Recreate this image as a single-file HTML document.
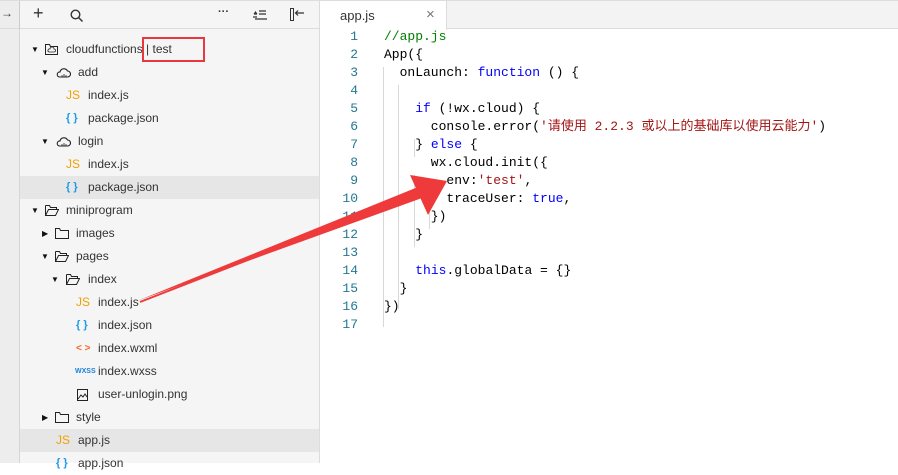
<!DOCTYPE html><html><head><meta charset="utf-8"><style>
*{margin:0;padding:0;box-sizing:border-box}
body{width:898px;height:463px;overflow:hidden;background:#fff;font-family:"Liberation Sans",sans-serif;position:relative}
.strip{position:absolute;left:0;top:0;width:20px;height:463px;background:#ededed;border-right:1px solid #d6d6d6}
.side{position:absolute;left:20px;top:0;width:300px;height:463px;background:#f5f5f5;border-right:1px solid #dcdcdc}
.tb{position:absolute;left:0;top:0;width:320px;height:29px;border-bottom:1px solid #dcdcdc;border-top:1px solid #ddd}
.row{position:absolute;left:20px;width:299px;height:23px;font-size:12px;color:#333;line-height:23px}
.row span{position:absolute;top:0}
.hl{background:#e6e6e6}
.tri{font-size:8px;color:#111}
.js{color:#f0a000;font-size:12px;font-weight:normal}
.br{color:#1a9be8;font-weight:bold;font-size:11px}
.tabbar{position:absolute;left:320px;top:0;width:578px;height:29px;background:#f3f3f3;border-bottom:1px solid #dcdcdc;border-top:1px solid #ddd}
.tab{position:absolute;left:0;top:0;width:127px;height:29px;background:#fff;border-right:1px solid #dcdcdc;font-size:13px;color:#333}
.code{position:absolute;left:320px;top:28px;font-family:"Liberation Mono","Noto Sans CJK SC",monospace;font-size:13px}
.ln{position:absolute;left:0;width:38px;text-align:right;color:#237893;height:18px;line-height:18px}
.cl{position:absolute;left:64px;white-space:pre;height:18px;line-height:18px;color:#000}
.k{color:#0000ff}.s{color:#a31515}.c{color:#008000}
.g{position:absolute;width:1px;background:#d8d8d8}
.cloud{position:absolute;top:7px}
</style></head><body>
<div class="strip"></div><div class="side"></div>
<div class="tb">
<span style="position:absolute;left:1px;top:5px;font-size:12px;color:#333">→</span>
<div style="position:absolute;left:19px;top:0;width:1px;height:28px;background:#ccc"></div>
<span style="position:absolute;left:33px;top:2px;font-size:18px;color:#333">+</span>
<svg style="position:absolute;left:70px;top:8px" width="14" height="14"><circle cx="5.5" cy="5.5" r="4.3" fill="none" stroke="#333" stroke-width="1.4"/><line x1="8.5" y1="8.5" x2="12.5" y2="12.5" stroke="#333" stroke-width="1.5"/></svg>
<span style="position:absolute;left:218px;top:5px;font-size:11px;font-weight:bold;color:#333">···</span>
<svg style="position:absolute;left:253px;top:9px" width="14" height="10"><path d="M1 4h3M0 7h4M6 1h7M6 4h7M2 9h12" stroke="#333" stroke-width="1.2"/><path d="M2.5 1 L0.5 4 L4.5 4Z" fill="#333"/></svg>
<svg style="position:absolute;left:290px;top:7px" width="16" height="14"><rect x="0.5" y="0.5" width="3" height="12" fill="none" stroke="#333"/><path d="M6 5h8M8 2.5 L5.5 5 L8 7.5" fill="none" stroke="#333" stroke-width="1.2"/></svg>
</div>

<div class="row" style="top:38px"><span class="tri" style="left:11px">▼</span>
<svg style="position:absolute;left:25px;top:6px" width="13" height="11"><path d="M0.5 0.5h4l1 2h7v8h-12z" fill="none" stroke="#222"/><path d="M4 8h5a1.5 1.5 0 0 0 0-3a2 2 0 0 0-4 0a1.5 1.5 0 0 0-1 3z" fill="none" stroke="#222" stroke-width=".8"/></svg>
<span style="left:46px">cloudfunctions | test</span></div>
<div style="position:absolute;left:142px;top:37px;width:63px;height:25px;border:2px solid #e8383d"></div>

<div class="row" style="top:61px"><span class="tri" style="left:21px">▼</span><svg class="cloud" style="left:36px" width="15" height="10"><path d="M3.5 9h8a3 3 0 0 0 0-6a4 4 0 0 0-7.5 1a2.5 2.5 0 0 0-0.5 5z" fill="none" stroke="#222" stroke-width="1.1"/><path d="M6 9v-2M8 9v-3M10 9v-2" stroke="#222" stroke-width=".8"/></svg><span style="left:58px">add</span></div>
<div class="row" style="top:84px"><span class="js" style="left:46px">JS</span><span style="left:68px">index.js</span></div>
<div class="row" style="top:107px"><span class="br" style="left:46px">{ }</span><span style="left:68px">package.json</span></div>
<div class="row" style="top:130px"><span class="tri" style="left:21px">▼</span><svg class="cloud" style="left:36px" width="15" height="10"><path d="M3.5 9h8a3 3 0 0 0 0-6a4 4 0 0 0-7.5 1a2.5 2.5 0 0 0-0.5 5z" fill="none" stroke="#222" stroke-width="1.1"/><path d="M6 9v-2M8 9v-3M10 9v-2" stroke="#222" stroke-width=".8"/></svg><span style="left:58px">login</span></div>
<div class="row" style="top:153px"><span class="js" style="left:46px">JS</span><span style="left:68px">index.js</span></div>
<div class="row hl" style="top:176px"><span class="br" style="left:46px">{ }</span><span style="left:68px">package.json</span></div>
<div class="row" style="top:199px"><span class="tri" style="left:11px">▼</span><svg style="position:absolute;left:25px;top:6px" width="14" height="11"><path d="M0.5 0.5h4l1 2h6v2M0.5 0.5v10h10l3-6h-10l-3 6" fill="none" stroke="#222"/></svg><span style="left:46px">miniprogram</span></div>
<div class="row" style="top:222px"><span class="tri" style="left:22px">▶</span><svg style="position:absolute;left:35px;top:6px" width="14" height="11"><path d="M0.5 0.5h4l1 2h8v8h-13z" fill="none" stroke="#222"/></svg><span style="left:56px">images</span></div>
<div class="row" style="top:245px"><span class="tri" style="left:21px">▼</span><svg style="position:absolute;left:35px;top:6px" width="14" height="11"><path d="M0.5 0.5h4l1 2h6v2M0.5 0.5v10h10l3-6h-10l-3 6" fill="none" stroke="#222"/></svg><span style="left:56px">pages</span></div>
<div class="row" style="top:268px"><span class="tri" style="left:31px">▼</span><svg style="position:absolute;left:46px;top:6px" width="14" height="11"><path d="M0.5 0.5h4l1 2h6v2M0.5 0.5v10h10l3-6h-10l-3 6" fill="none" stroke="#222"/></svg><span style="left:68px">index</span></div>
<div class="row" style="top:291px"><span class="js" style="left:56px">JS</span><span style="left:78px">index.js</span></div>
<div class="row" style="top:314px"><span class="br" style="left:56px">{ }</span><span style="left:78px">index.json</span></div>
<div class="row" style="top:337px"><span style="left:56px;color:#f06a28;font-weight:bold;font-size:10px">&lt; &gt;</span><span style="left:78px">index.wxml</span></div>
<div class="row" style="top:360px"><span style="left:55px;color:#1a7fd8;font-weight:bold;font-size:7px">WXSS</span><span style="left:78px">index.wxss</span></div>
<div class="row" style="top:383px"><svg style="position:absolute;left:57px;top:6px" width="11" height="12"><rect x="0.5" y="0.5" width="10" height="11" fill="none" stroke="#222"/><path d="M1 10l3-4 2 2 2-3 2 3" fill="none" stroke="#222"/></svg><span style="left:78px">user-unlogin.png</span></div>
<div class="row" style="top:406px"><span class="tri" style="left:22px">▶</span><svg style="position:absolute;left:35px;top:6px" width="14" height="11"><path d="M0.5 0.5h4l1 2h8v8h-13z" fill="none" stroke="#222"/></svg><span style="left:56px">style</span></div>
<div class="row hl" style="top:429px"><span class="js" style="left:36px">JS</span><span style="left:58px">app.js</span></div>
<div class="row" style="top:452px"><span class="br" style="left:36px">{ }</span><span style="left:58px">app.json</span></div>

<div class="tabbar"><div class="tab"><span style="position:absolute;left:20px;top:7px">app.js</span><span style="position:absolute;left:106px;top:5px;font-size:15px;color:#777">×</span></div></div>

<div class="code">
<div class="g" style="top:39px;height:260px;left:63px"></div>
<div class="g" style="left:78px;top:57px;height:224px"></div>
<div class="g" style="left:94px;top:111px;height:18px"></div>
<div class="g" style="left:94px;top:147px;height:72px"></div>
<div class="g" style="left:109px;top:165px;height:36px"></div>
<div class="ln" style="top:0">1</div><div class="cl c" style="top:0">//app.js</div>
<div class="ln" style="top:18px">2</div><div class="cl" style="top:18px">App({</div>
<div class="ln" style="top:36px">3</div><div class="cl" style="top:36px">  onLaunch: <span class="k">function</span> () {</div>
<div class="ln" style="top:54px">4</div>
<div class="ln" style="top:72px">5</div><div class="cl" style="top:72px">    <span class="k">if</span> (!wx.cloud) {</div>
<div class="ln" style="top:90px">6</div><div class="cl" style="top:90px">      console.error(<span class="s">'请使用 2.2.3 或以上的基础库以使用云能力'</span>)</div>
<div class="ln" style="top:108px">7</div><div class="cl" style="top:108px">    } <span class="k">else</span> {</div>
<div class="ln" style="top:126px">8</div><div class="cl" style="top:126px">      wx.cloud.init({</div>
<div class="ln" style="top:144px">9</div><div class="cl" style="top:144px">        env:<span class="s">'test'</span>,</div>
<div class="ln" style="top:162px">10</div><div class="cl" style="top:162px">        traceUser: <span class="k">true</span>,</div>
<div class="ln" style="top:180px">11</div><div class="cl" style="top:180px">      })</div>
<div class="ln" style="top:198px">12</div><div class="cl" style="top:198px">    }</div>
<div class="ln" style="top:216px">13</div>
<div class="ln" style="top:234px">14</div><div class="cl" style="top:234px">    <span class="k">this</span>.globalData = {}</div>
<div class="ln" style="top:252px">15</div><div class="cl" style="top:252px">  }</div>
<div class="ln" style="top:270px">16</div><div class="cl" style="top:270px">})</div>
<div class="ln" style="top:288px">17</div>
</div>

<svg style="position:absolute;left:0;top:0" width="898" height="463">
<path d="M140 302 L420 193" stroke="#ee3a3a" stroke-width="2" fill="none"/>
<path d="M137 301 L418 187 L422 198 Z" fill="#ee3a3a"/>
<path d="M447 181 L410 175 L428 215 Z" fill="#ee3a3a"/>
</svg>
</body></html>
